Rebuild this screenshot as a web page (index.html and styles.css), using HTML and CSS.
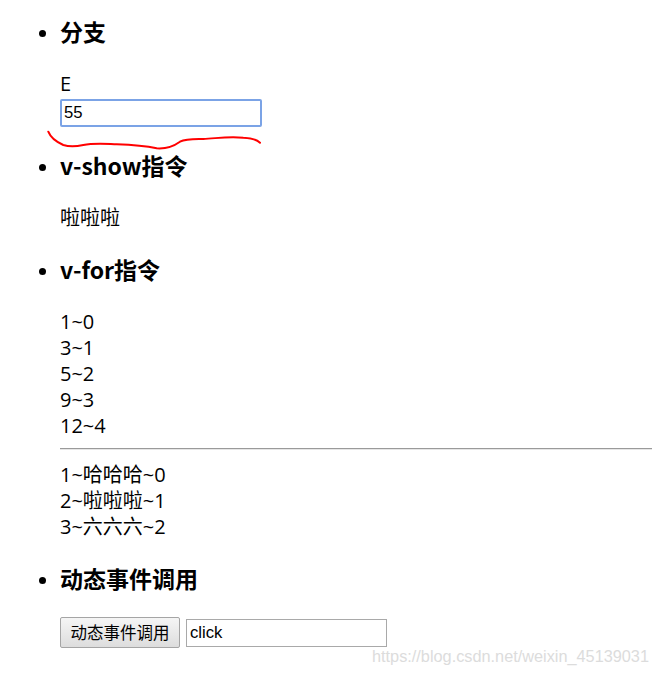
FILE: index.html
```html
<!DOCTYPE html>
<html>
<head>
<meta charset="utf-8">
<link rel="stylesheet" href="styles.css">
</head>
<body>
<ul class="list">
  <li class="item">
    <h3 class="title">分支</h3>
    <div class="line">E</div>
    <input class="field focused" type="text" value="55">
  </li>
  <li class="item">
    <h3 class="title">v-show指令</h3>
    <div class="line">啦啦啦</div>
  </li>
  <li class="item">
    <h3 class="title">v-for指令</h3>
    <div class="line">1~0</div>
    <div class="line">3~1</div>
    <div class="line">5~2</div>
    <div class="line">9~3</div>
    <div class="line">12~4</div>
    <hr class="rule">
    <div class="line">1~哈哈哈~0</div>
    <div class="line">2~啦啦啦~1</div>
    <div class="line">3~六六六~2</div>
  </li>
  <li class="item">
    <h3 class="title">动态事件调用</h3>
    <div class="controls">
      <button class="btn" type="button">动态事件调用</button>
      <input class="field plain" type="text" value="click">
    </div>
  </li>
</ul>
<svg class="scribble" width="230" height="30" viewBox="0 0 230 30">
  <path d="M2.3 5.7 C4 10 8 15 17.3 19 C24 21 30 20.5 37.3 19 C48 17 60 18 70.7 18.3 C84 18.8 97 19.5 110.7 22.3 C120 23 128 20 134 15.7 C140 12.5 148 13 157.3 13 C170 12.5 182 10 197.3 11.7 C205 12 210 13 214 16.7" fill="none" stroke="#ff0000" stroke-width="2" stroke-linecap="round"/>
</svg>
<div class="watermark">https://blog.csdn.net/weixin_45139031</div>
</body>
</html>
```
FILE: styles.css
```css
html, body {
  margin: 0;
  padding: 0;
  background: #ffffff;
}
body {
  font-family: "Open Sans", "Noto Sans CJK SC", sans-serif;
  font-size: 20px;
  color: #000;
  position: relative;
  width: 652px;
  height: 676px;
  overflow: hidden;
}
.list {
  margin: 0;
  padding: 18px 0 0 60px;
  list-style: disc;
}
.item {
  margin-top: 25px;
}
.item:first-child {
  margin-top: 0;
}
.title {
  margin: 0 0 27px 0;
  font-family: "Noto Sans CJK SC", sans-serif;
  font-size: 23px;
  line-height: 26px;
  height: 26px;
  font-weight: bold;
}
.line {
  line-height: 26px;
  height: 26px;
}
.field {
  box-sizing: border-box;
  font-family: "Liberation Sans", Arial, sans-serif;
  font-size: 16.7px;
  padding: 0 2px;
  margin: 0;
  background: #fff;
  color: #000;
  outline: none;
}
.focused {
  display: block;
  margin-top: 2px;
  width: 202px;
  height: 28px;
  border: 2px solid #7ba3e6;
  border-radius: 2px;
}
.rule {
  margin: 9px 0 12px 0;
  height: 0;
  border: 0;
  border-top: 1px solid #9a9a9a;
  border-bottom: 1px solid #e6e6e6;
  width: 592px;
}
.controls {
  display: flex;
  align-items: center;
  gap: 6px;
  margin-top: -1px;
}
.btn {
  box-sizing: border-box;
  width: 120px;
  height: 31px;
  font-family: "Noto Sans CJK SC", sans-serif;
  font-size: 16.5px;
  color: #000;
  border: 1px solid #a5a5a5;
  border-radius: 2px;
  background: linear-gradient(#f5f5f5, #dddddd);
  padding: 0;
  line-height: 29px;
}
.plain {
  width: 201px;
  height: 28px;
  border: 1px solid #a9a9a9;
  padding: 0 3px;
}
.scribble {
  position: absolute;
  left: 46px;
  top: 126px;
}
.watermark {
  position: absolute;
  left: 372px;
  top: 647px;
  font-family: "Liberation Sans", Arial, sans-serif;
  font-size: 16.3px;
  color: #dcdcdc;
  white-space: nowrap;
}
```
